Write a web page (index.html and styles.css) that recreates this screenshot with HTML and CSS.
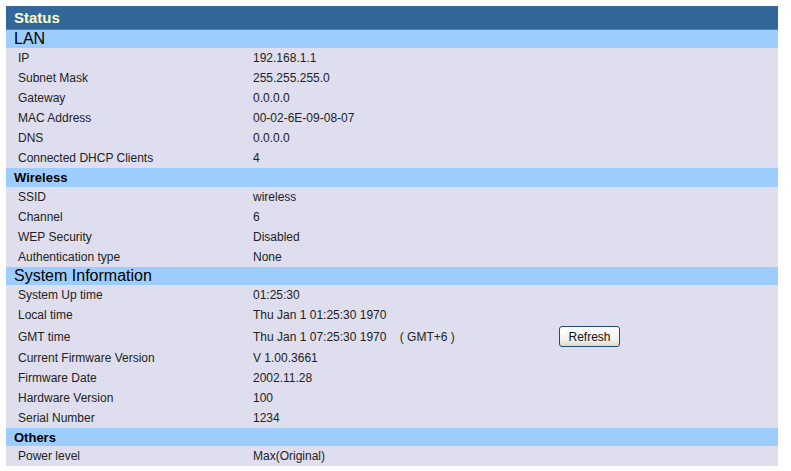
FILE: index.html
```html
<!DOCTYPE html>
<html>

<head>
    <title>Status</title>
    <link rel="stylesheet" href="styles.css">
</head>

<body>
    <table class="status">
        <tr class="title"><td colspan="2">Status</td></tr>

        <tr class="section big"><td colspan="2">LAN</td></tr>
        <tr><td class="label">IP</td><td>192.168.1.1</td></tr>
        <tr><td class="label">Subnet Mask</td><td>255.255.255.0</td></tr>
        <tr><td class="label">Gateway</td><td>0.0.0.0</td></tr>
        <tr><td class="label">MAC Address</td><td>00-02-6E-09-08-07</td></tr>
        <tr><td class="label">DNS</td><td>0.0.0.0</td></tr>
        <tr><td class="label">Connected DHCP Clients</td><td>4</td></tr>

        <tr class="section"><td colspan="2">Wireless</td></tr>
        <tr><td class="label">SSID</td><td>wireless</td></tr>
        <tr><td class="label">Channel</td><td>6</td></tr>
        <tr><td class="label">WEP Security</td><td>Disabled</td></tr>
        <tr><td class="label">Authentication type</td><td>None</td></tr>

        <tr class="section big sys"><td colspan="2">System Information</td></tr>
        <tr><td class="label">System Up time</td><td>01:25:30</td></tr>
        <tr><td class="label">Local time</td><td>Thu Jan 1 01:25:30 1970</td></tr>
        <tr class="tall">
            <td class="label">GMT time</td>
            <td>
                <div class="gmt">
                    <span class="gmt-text">Thu Jan 1 07:25:30 1970&nbsp;&nbsp;&nbsp; ( GMT+6 )</span>
                    <button class="refresh" onclick="location.reload()">Refresh</button>
                </div>
            </td>
        </tr>
        <tr><td class="label">Current Firmware Version</td><td>V 1.00.3661</td></tr>
        <tr><td class="label">Firmware Date</td><td>2002.11.28</td></tr>
        <tr><td class="label">Hardware Version</td><td>100</td></tr>
        <tr><td class="label">Serial Number</td><td>1234</td></tr>

        <tr class="section others"><td colspan="2">Others</td></tr>
        <tr><td class="label">Power level</td><td>Max(Original)</td></tr>
    </table>
</body>

</html>
```

FILE: styles.css
```css
body {
    margin: 6px;
    background: #fff;
    font-family: "Liberation Sans", Arial, sans-serif;
    font-size: 12px;
    color: #222;
}

.status {
    width: 772px;
    border-collapse: collapse;
    background: #dfdeee;
}

.status td {
    padding: 0;
    height: 20px;
    vertical-align: middle;
}

.status td.label {
    width: 235px;
    padding-left: 12px;
}

.title td {
    height: 23px;
    padding-left: 8px;
    background: #336699;
    border-bottom: 1px solid #5a82b4;
    color: #ffffc8;
    font-weight: bold;
    font-size: 15px;
}

.section td {
    height: 19px;
    padding-left: 8px;
    background: #9ccdfe;
    color: #000;
    font-weight: bold;
    font-size: 13px;
}

.section.big td {
    height: 18px;
    font-weight: normal;
    font-size: 16px;
}

.section.sys td {
    height: 17px;
}

.section.others td {
    height: 18px;
}

.tall td {
    height: 23px;
}

.gmt {
    display: flex;
    align-items: center;
}

.gmt-text {
    width: 306px;
}

.refresh {
    width: 61px;
    height: 21px;
    padding: 0;
    border: 1px solid #1c4d7c;
    border-radius: 3px;
    background: linear-gradient(#ffffff, #f2f1ea 70%, #dcd9cc);
    font-family: "Liberation Sans", Arial, sans-serif;
    font-size: 12px;
    color: #111;
}
```
